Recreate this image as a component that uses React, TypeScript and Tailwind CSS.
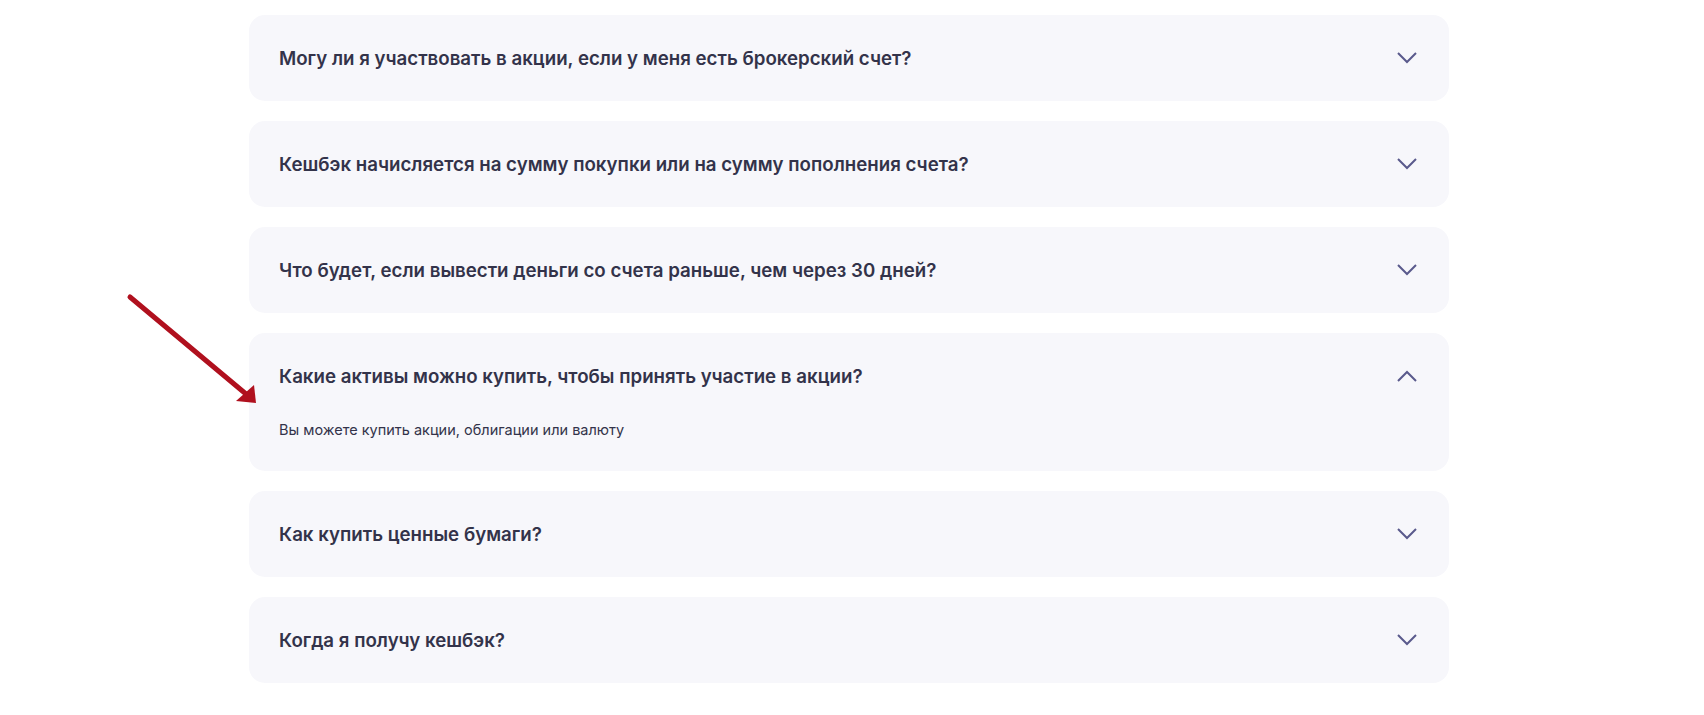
const items = [
  { q: "Могу ли я участвовать в акции, если у меня есть брокерский счет?" },
  { q: "Кешбэк начисляется на сумму покупки или на сумму пополнения счета?" },
  { q: "Что будет, если вывести деньги со счета раньше, чем через 30 дней?" },
  {
    q: "Какие активы можно купить, чтобы принять участие в акции?",
    a: "Вы можете купить акции, облигации или валюту",
  },
  { q: "Как купить ценные бумаги?" },
  { q: "Когда я получу кешбэк?" },
];

function Chevron({ up }: { up?: boolean }) {
  return (
    <svg width="20" height="12" viewBox="0 0 20 12" fill="none">
      <polyline
        points={up ? "1,11 10,2 19,11" : "1,1 10,10 19,1"}
        stroke="#5a5a8c"
        strokeWidth="2"
      />
    </svg>
  );
}

export default function App() {
  return (
    <div className="relative min-h-[715px] bg-white font-['Inter',sans-serif]">
      <div className="ml-[249px] w-[1200px] pt-[15px] flex flex-col gap-5">
        {items.map((item) => (
          <div key={item.q} className="bg-[#f7f7fb] rounded-2xl">
            <div className="h-[86px] flex items-center justify-between pl-[30px] pr-[32px]">
              <span className="text-[18.7px] font-semibold text-[#33334a] translate-y-[1px]">
                {item.q}
              </span>
              <Chevron up={!!item.a} />
            </div>
            {item.a && (
              <div className="pl-[30px] pb-[30px] text-[14.5px] leading-[22px] text-[#33334a]">
                {item.a}
              </div>
            )}
          </div>
        ))}
      </div>
      <svg
        className="absolute left-[120px] top-[290px]"
        width="145"
        height="125"
        viewBox="120 290 145 125"
      >
        <line x1="130" y1="297" x2="246" y2="394" stroke="#b0101e" strokeWidth="5" strokeLinecap="round" />
        <polygon points="256,403 236,401 254,385" fill="#b0101e" />
      </svg>
    </div>
  );
}
